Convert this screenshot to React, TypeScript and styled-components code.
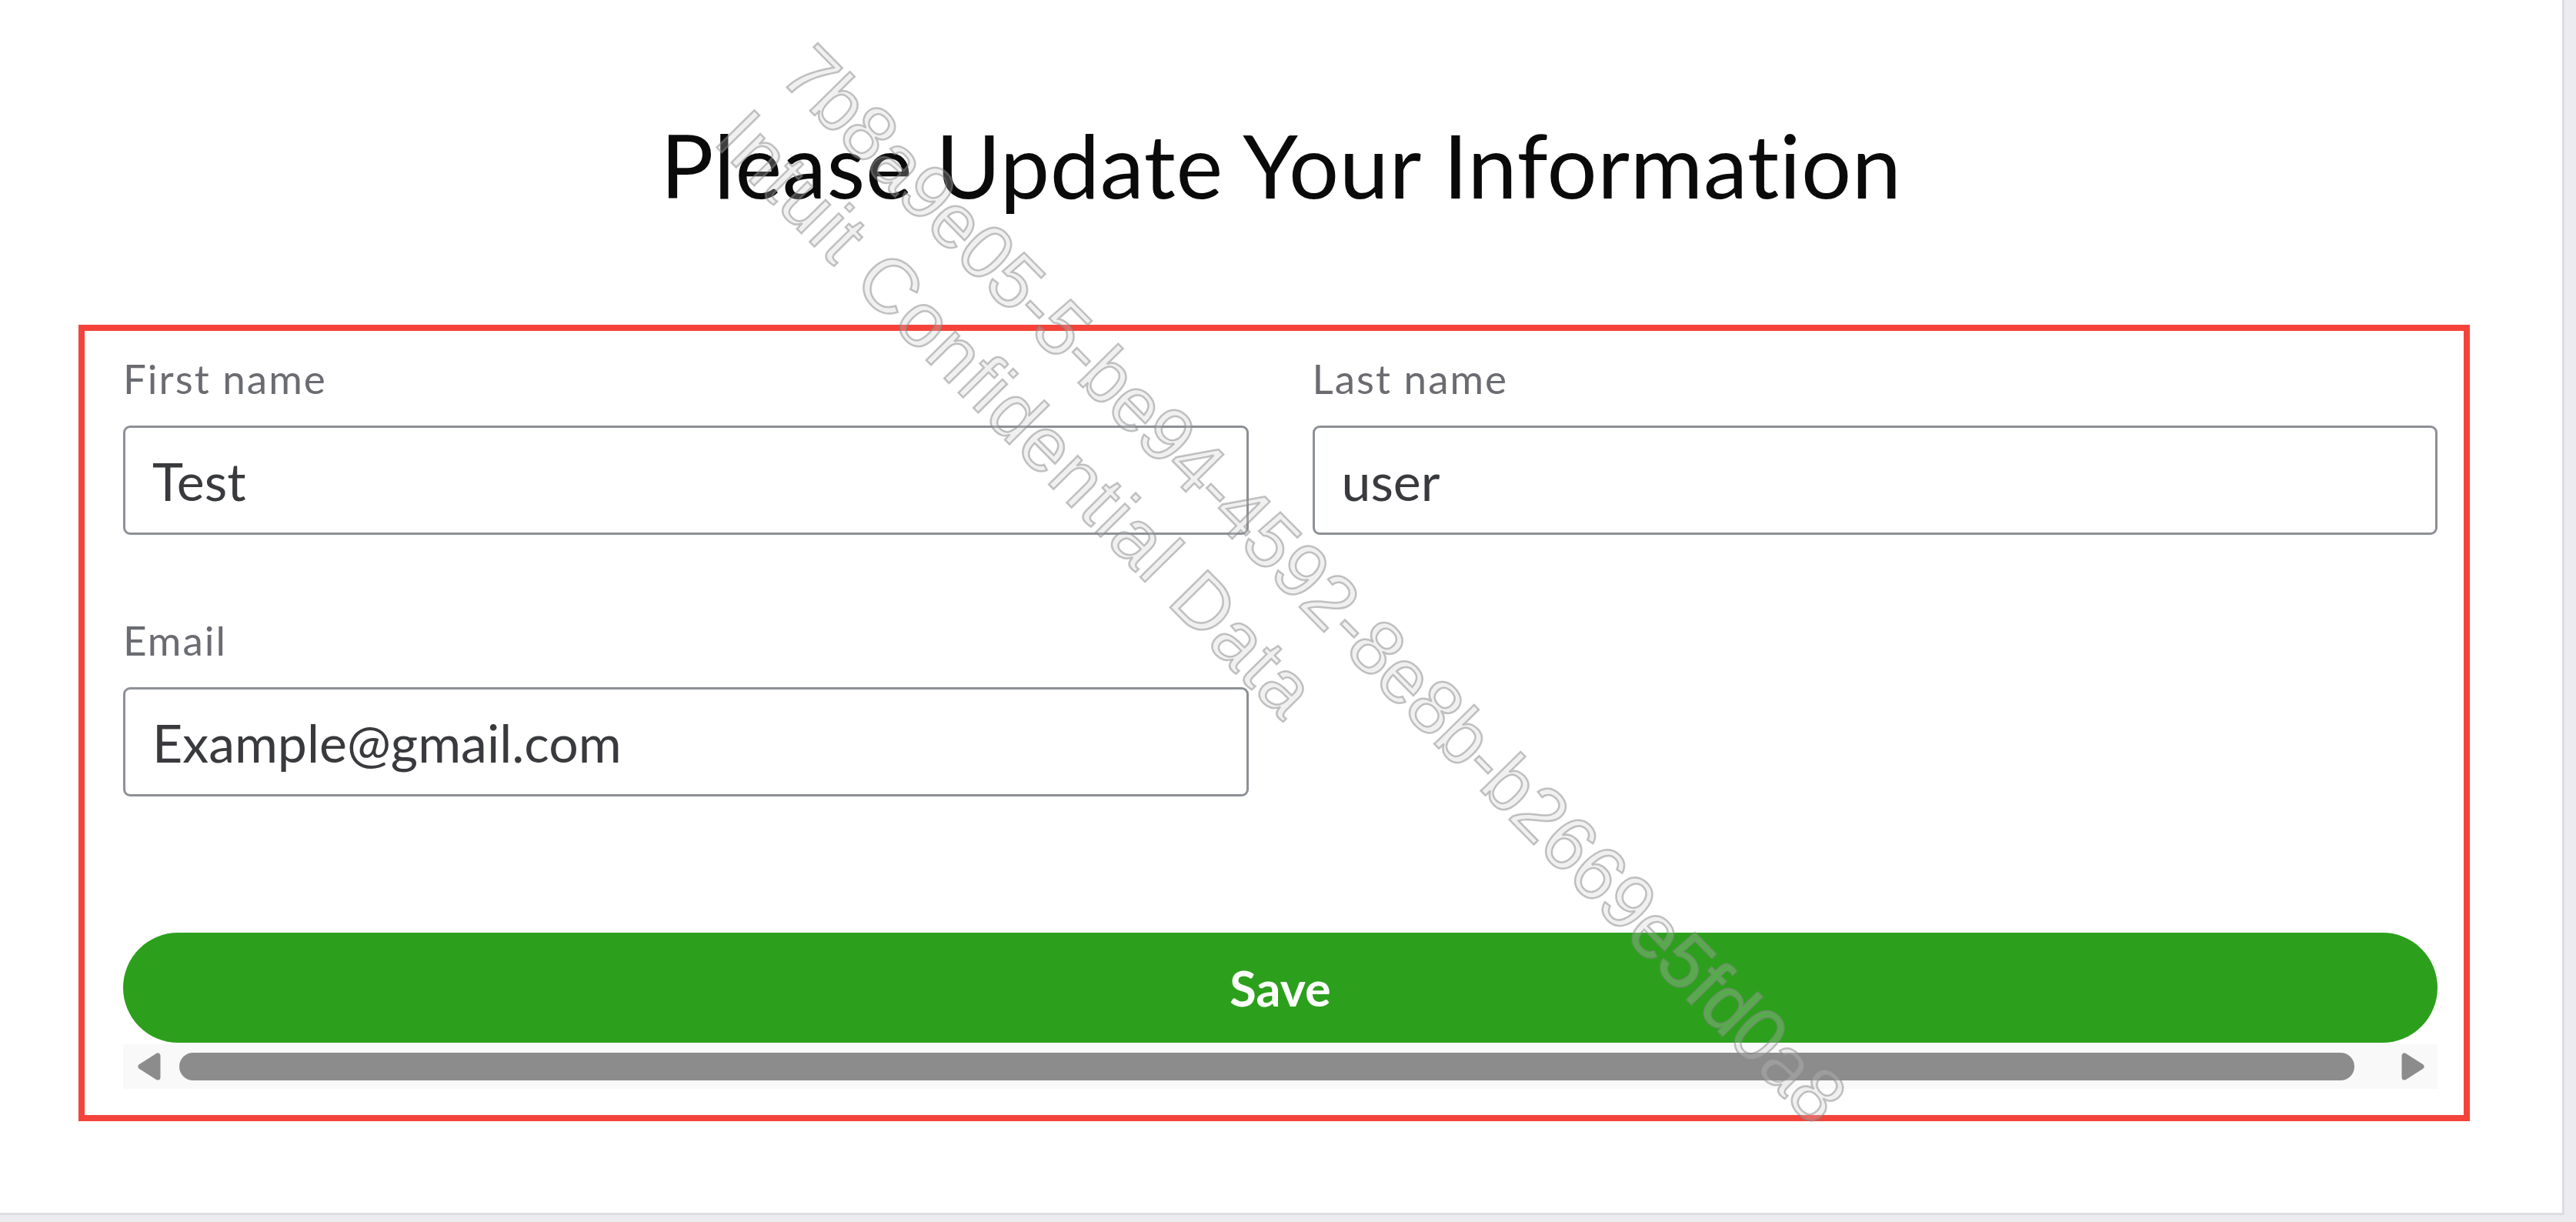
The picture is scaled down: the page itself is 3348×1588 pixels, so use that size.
import styled, { createGlobalStyle } from "styled-components";

const GlobalStyle = createGlobalStyle`
  html, body {
    margin: 0;
    padding: 0;
    background: #ebebf0;
  }
  body {
    font-family: Lato, "Open Sans", Arial, sans-serif;
    font-variant-ligatures: none;
  }
  * {
    box-sizing: border-box;
  }
`;

const Panel = styled.div`
  position: relative;
  width: 3333px;
  height: 1579px;
  background: #ffffff;
  border-right: 3px solid #dcdde3;
  border-bottom: 3px solid #dcdde3;
  overflow: hidden;
`;

const Title = styled.h1`
  margin: 144px 0 140px;
  font-family: Lato, "Open Sans", sans-serif;
  font-size: 115px;
  font-weight: 400;
  line-height: 138px;
  letter-spacing: 0.6px;
  color: #0a0a0a;
  text-align: center;
  font-variant-ligatures: none;
`;

const Outline = styled.div`
  margin-left: 102px;
  width: 3108px;
  border: 8px solid #f4433a;
  padding: 30px 34px 34px 50px;
`;

const FieldGrid = styled.div`
  display: grid;
  grid-template-columns: 1fr 1fr;
  column-gap: 83px;
  row-gap: 105px;
`;

const Field = styled.label`
  display: flex;
  flex-direction: column;
  gap: 29px;
`;

const Label = styled.span`
  font-family: Lato, "Open Sans", sans-serif;
  font-size: 53px;
  line-height: 64px;
  letter-spacing: 2px;
  color: #6b6c72;
`;

const Input = styled.input`
  width: 100%;
  height: 142px;
  margin: 0;
  padding: 0 35px;
  border: 3px solid #8d9096;
  border-radius: 9px;
  background: #ffffff;
  font-family: Lato, "Open Sans", sans-serif;
  font-size: 68px;
  color: #393a3d;
  outline: none;
`;

const SaveButton = styled.button`
  display: block;
  width: 100%;
  height: 143px;
  margin-top: 177px;
  border: none;
  border-radius: 72px;
  background: #2ca01c;
  color: #ffffff;
  font-family: Lato, "Open Sans", sans-serif;
  font-size: 63px;
  font-weight: 700;
  cursor: pointer;
`;

const ScrollTrack = styled.div`
  display: flex;
  align-items: center;
  height: 58px;
  margin-top: 2px;
  padding: 0 17px 0 19px;
  background: #f9f9f9;
`;

const Thumb = styled.div`
  flex: 0 0 2827px;
  height: 36px;
  margin-left: 24px;
  border-radius: 18px;
  background: #8c8c8c;
`;

const ArrowButton = styled.svg<{ $end?: boolean }>`
  flex: none;
  width: 30px;
  height: 36px;
  margin-left: ${(p) => (p.$end ? "auto" : "0")};
`;

const Watermark = styled.div`
  position: absolute;
  left: 1078px;
  top: 34px;
  transform-origin: 0 0;
  transform: rotate(45.4deg);
  font-family: "Liberation Sans", Arial, sans-serif;
  font-size: 100px;
  line-height: 120px;
  white-space: nowrap;
  color: rgba(200, 200, 200, 0.28);
  -webkit-text-stroke: 2.5px rgba(135, 135, 135, 0.5);
  pointer-events: none;
`;

const WatermarkLine = styled.div<{ $spacing: number }>`
  letter-spacing: ${(p) => p.$spacing}px;
`;

function Arrow({ dir }: { dir: "left" | "right" }) {
  const points = dir === "left" ? "26,4 26,32 4,18" : "4,4 4,32 26,18";
  return (
    <ArrowButton viewBox="0 0 30 36" $end={dir === "right"}>
      <polygon
        points={points}
        fill="#8c8c8c"
        stroke="#8c8c8c"
        strokeWidth="7"
        strokeLinejoin="round"
      />
    </ArrowButton>
  );
}

export default function App() {
  return (
    <>
      <GlobalStyle />
      <Panel>
        <Title>Please Update Your Information</Title>

        <Outline>
          <FieldGrid>
            <Field>
              <Label>First name</Label>
              <Input value="Test" readOnly />
            </Field>
            <Field>
              <Label>Last name</Label>
              <Input value="user" readOnly />
            </Field>
            <Field>
              <Label>Email</Label>
              <Input value="Example@gmail.com" readOnly />
            </Field>
          </FieldGrid>

          <SaveButton>Save</SaveButton>

          <ScrollTrack>
            <Arrow dir="left" />
            <Thumb />
            <Arrow dir="right" />
          </ScrollTrack>
        </Outline>

        <Watermark>
          <WatermarkLine $spacing={-1.5}>
            7b8a9e05-5-be94-4592-8e8b-b2669e5fd0a8
          </WatermarkLine>
          <WatermarkLine $spacing={2}>Intuit Confidential Data</WatermarkLine>
        </Watermark>
      </Panel>
    </>
  );
}
